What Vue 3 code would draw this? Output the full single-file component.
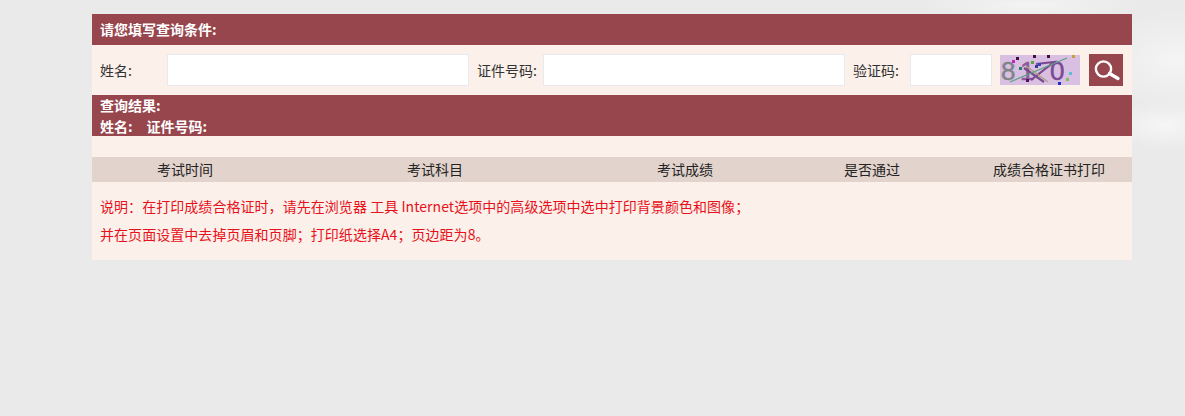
<script setup>
const columns = ['考试时间', '考试科目', '考试成绩', '是否通过', '成绩合格证书打印']
const dots = [
  [12, 5, '#d020c0'], [16, 2, '#3a1040'], [31, 6, '#60a040'], [35, 10, '#304090'], [33, 0, '#401040'], [38, 8, '#4040c0'],
  [19, 12, '#208060'], [26, 24, '#5a1060'], [72, 0, '#c0a040'], [69, 17, '#60c0d0'], [66, 23, '#80c060'], [58, 27, '#2030c0'], [47, 0, '#401040']
]
</script>

<template>
  <main class="page">
    <section class="panel">
      <h2 class="bar title">请您填写查询条件:</h2>
      <form class="search" @submit.prevent>
        <label class="label name-label" for="name">姓名:</label>
        <input id="name" class="field name-field" type="text" />
        <label class="label id-label" for="idno">证件号码:</label>
        <input id="idno" class="field id-field" type="text" />
        <label class="label code-label" for="code">验证码:</label>
        <input id="code" class="field code-field" type="text" />
        <svg class="captcha" viewBox="0 0 80 30" width="80" height="30" aria-label="验证码图片">
          <rect width="80" height="30" fill="#d9c0e2" />
          <text x="1" y="24.5" class="digit grey">8</text>
          <text x="20" y="24.5" class="digit purple">1</text>
          <path d="M36 9 L54 7 L31 25 M24 13 L44 27" fill="none" stroke="#7a4a90" stroke-width="2.2" />
          <path d="M26 11 L48 27" stroke="#b0a080" stroke-width="1.4" />
          <text x="50" y="24.5" class="digit purple-strong">0</text>
          <path d="M10 27 L67 3" stroke="#5aa080" stroke-width="1.2" />
          <rect v-for="(d, i) in dots" :key="i" :x="d[0]" :y="d[1]" width="3" height="3" :fill="d[2]" />
        </svg>
        <button class="go" type="submit" aria-label="查询">
          <svg viewBox="0 0 34 32" width="34" height="32">
            <circle cx="14.5" cy="15" r="7.6" fill="none" stroke="#fff" stroke-width="2.4" />
            <path d="M20.5 19.5 L29 24.5" stroke="#fff" stroke-width="3.4" stroke-linecap="round" />
          </svg>
        </button>
      </form>
      <div class="bar result">
        <div>查询结果:</div>
        <div class="who"><span>姓名:</span><span>证件号码:</span></div>
      </div>
      <div class="gap"></div>
      <div class="thead">
        <div v-for="c in columns" :key="c">{{ c }}</div>
      </div>
      <div class="note">
        <p>说明：在打印成绩合格证时，请先在浏览器 工具 Internet选项中的高级选项中选中打印背景颜色和图像；</p>
        <p>并在页面设置中去掉页眉和页脚；打印纸选择A4；页边距为8。</p>
      </div>
    </section>
  </main>
</template>

<style>
html, body { margin: 0; background: #eaeaea; }
</style>

<style scoped>
.page {
  box-sizing: border-box;
  width: 1185px;
  height: 416px;
  padding: 14px 53px 0 92px;
  overflow: hidden;
  font-family: "Noto Sans CJK SC", "Noto Sans", sans-serif;
  font-size: 14px;
  color: #333;
  background:
    radial-gradient(ellipse 110px 14px at 1030px 5px, #f3f3f3, transparent),
    radial-gradient(ellipse 80px 50px at 1175px 60px, #f4f4f4, transparent),
    radial-gradient(ellipse 60px 24px at 1165px 125px, #f6f6f6, transparent),
    #eaeaea;
}
.panel { width: 1040px; background: #fbf0ea; }
.bar { background: #97464e; color: #fff; font-weight: 700; padding-left: 8px; }
.title { margin: 0; height: 31px; line-height: 31px; font-size: 14px; }
.search { display: flex; align-items: center; height: 50px; padding-left: 8px; box-sizing: border-box; }
.label { white-space: nowrap; }
.name-label { width: 67px; }
.id-label { width: 66px; }
.code-label { width: 57px; }
.field {
  box-sizing: border-box;
  height: 32px;
  padding: 0 6px;
  background: #fff;
  border: 1px solid #e8e8ee;
  outline: none;
}
.name-field { width: 302px; margin-right: 8px; }
.id-field { width: 302px; margin-right: 8px; }
.code-field { width: 82px; margin-right: 8px; }
.captcha { display: block; margin-right: 9px; }
.digit { font-family: "Liberation Sans", sans-serif; font-size: 26px; stroke-width: 0.5px; }
.grey { fill: #7f8488; stroke: #7f8488; }
.purple { fill: #8a5a9a; stroke: #8a5a9a; }
.purple-strong { fill: #7a4a96; stroke: #7a4a96; }
.go {
  display: block;
  width: 34px;
  height: 32px;
  padding: 0;
  border: 0;
  background: #97464e;
}
.go svg { display: block; }
.result { height: 41px; line-height: 20.5px; font-size: 14px; }
.who { display: flex; gap: 14px; }
.gap { height: 21px; }
.thead {
  display: grid;
  grid-template-columns: 186px 314px 186px 188px 166px;
  height: 25px;
  line-height: 24px;
  text-align: center;
  color: #222;
  background: #e2d3cc;
}
.note { height: 78px; padding: 10px 8px 0; box-sizing: border-box; color: #e8101a; letter-spacing: 0.05px; }
.note p { margin: 0; height: 28px; line-height: 28px; }
</style>
